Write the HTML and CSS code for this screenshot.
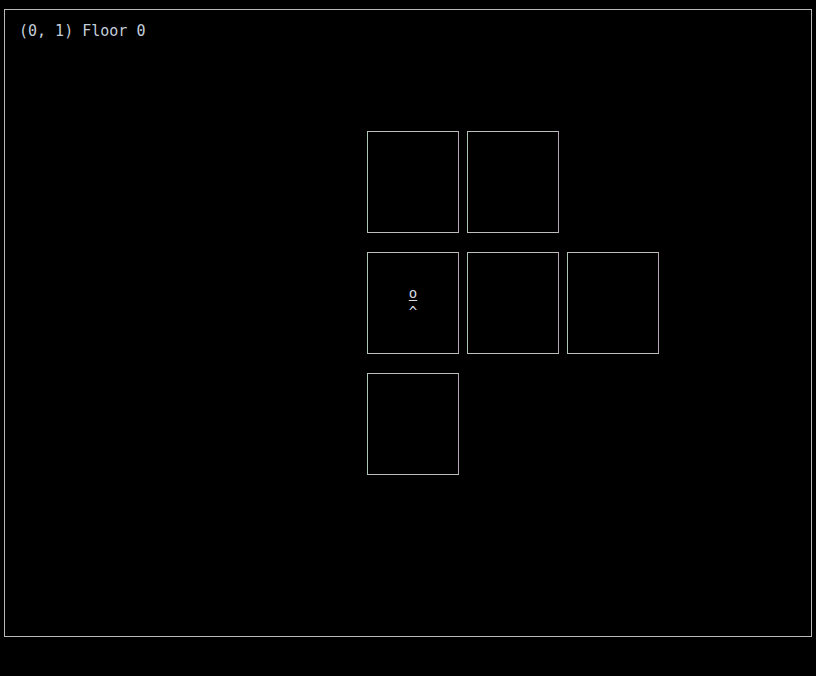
FILE: index.html
```html
<!DOCTYPE html>
<html>
<head>
<meta charset="utf-8">
<link rel="stylesheet" href="styles.css">
</head>
<body>
<div class="frame">
  <div class="status">(0, 1) Floor 0</div>
  <div class="map">
    <div class="room c1 r1"></div>
    <div class="room c2 r1"></div>
    <div class="room c1 r2"><div class="player"><span class="head">o</span><span class="feet">^</span></div></div>
    <div class="room c2 r2"></div>
    <div class="room c3 r2"></div>
    <div class="room c1 r3"></div>
  </div>
</div>
</body>
</html>
```

FILE: styles.css
```css
html, body {
  margin: 0;
  padding: 0;
  background: #000;
  width: 816px;
  height: 676px;
  overflow: hidden;
}
.frame {
  margin: 9px 0 0 4px;
  width: 806px;
  height: 626px;
  border: 1px solid #b9b9b9;
  position: relative;
}
.status {
  font-family: "DejaVu Sans Mono", monospace;
  font-size: 15px;
  line-height: 18px;
  color: #c3cedb;
  padding: 12px 0 0 14px;
  height: 18px;
}
.map {
  display: grid;
  grid-template-columns: repeat(3, 92px);
  grid-template-rows: repeat(3, 102px);
  column-gap: 8px;
  row-gap: 19px;
  margin: 91px 0 0 362px;
}
.room {
  box-sizing: border-box;
  border: 1px solid #bdbdbd;
  border-left-color: #a9c7b2;
  border-right-color: #b7a6b8;
  display: flex;
  align-items: center;
  justify-content: center;
}
.c1 { grid-column: 1; }
.c2 { grid-column: 2; }
.c3 { grid-column: 3; }
.r1 { grid-row: 1; }
.r2 { grid-row: 2; }
.r3 { grid-row: 3; }
.player {
  display: flex;
  flex-direction: column;
  align-items: center;
  font-family: "DejaVu Sans Mono", monospace;
  font-size: 14px;
  line-height: 13px;
  color: #d8dde3;
  margin-top: 0;
}
.head {
  text-decoration: underline;
  text-underline-offset: 2px;
}
.feet {
  margin-top: 6px;
}
```
